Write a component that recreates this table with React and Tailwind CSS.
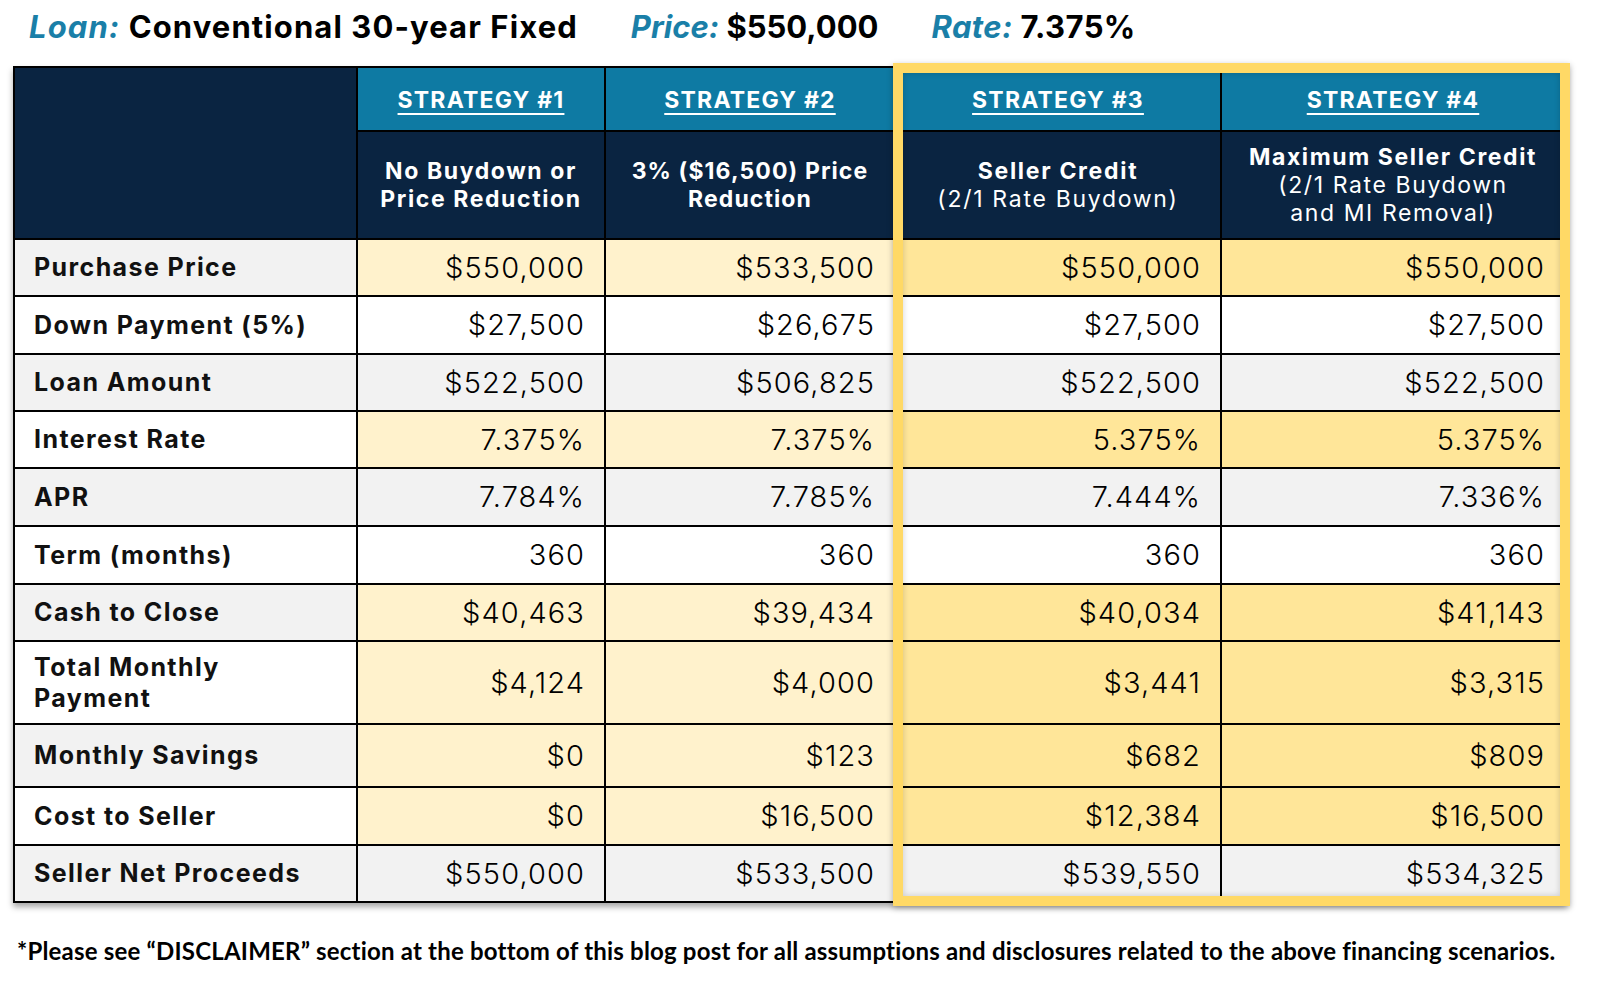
import React from "react";

const rows = [
  { label: "Purchase Price", v: ["$550,000", "$533,500", "$550,000", "$550,000"], hi: true },
  { label: "Down Payment (5%)", v: ["$27,500", "$26,675", "$27,500", "$27,500"] },
  { label: "Loan Amount", v: ["$522,500", "$506,825", "$522,500", "$522,500"] },
  { label: "Interest Rate", v: ["7.375%", "7.375%", "5.375%", "5.375%"], hi: true },
  { label: "APR", v: ["7.784%", "7.785%", "7.444%", "7.336%"] },
  { label: "Term (months)", v: ["360", "360", "360", "360"] },
  { label: "Cash to Close", v: ["$40,463", "$39,434", "$40,034", "$41,143"], hi: true },
  { label: "Total Monthly Payment", v: ["$4,124", "$4,000", "$3,441", "$3,315"], hi: true },
  { label: "Monthly Savings", v: ["$0", "$123", "$682", "$809"], hi: true },
  { label: "Cost to Seller", v: ["$0", "$16,500", "$12,384", "$16,500"], hi: true },
  { label: "Seller Net Proceeds", v: ["$550,000", "$533,500", "$539,550", "$534,325"] },
];

const font = { fontFamily: "Inter, 'Open Sans', sans-serif" };

const App = () => (
  <div className="w-[1600px] h-[982px] bg-white relative overflow-hidden" style={font}>
    {/* title line */}
    <div className="flex gap-[53px] pl-[29px] pt-[4px] h-[66px] text-[31px] font-bold text-black">
      <div className="tracking-[1.1px]">
        <span className="italic text-[#1a7fa8]">Loan:</span> Conventional 30-year Fixed
      </div>
      <div className="tracking-[0px]">
        <span className="italic text-[#1a7fa8]">Price:</span> $550,000
      </div>
      <div className="tracking-[0.4px]">
        <span className="italic text-[#1a7fa8]">Rate:</span> 7.375%
      </div>
    </div>

    {/* table */}
    <div className="relative ml-[13px] w-[1553px]">
      <div className="grid grid-cols-[341px_246px_288px_324px_342px] grid-rows-[62px_106px_55px_56px_55px_55px_56px_56px_55px_81px_61px_56px_55px] gap-[2px] p-[2px] bg-black shadow-[0_4px_6px_rgba(0,0,0,0.35)]">
        <div className="row-span-2 bg-[#0a2441]" />
        {["STRATEGY #1", "STRATEGY #2", "STRATEGY #3", "STRATEGY #4"].map((s) => (
          <div key={s} className="bg-[#0e7aa3] flex items-center justify-center pt-[2px]">
            <span className="text-white font-bold text-[23px] underline underline-offset-[5px] decoration-[2px] tracking-[1.2px]">
              {s}
            </span>
          </div>
        ))}
        <div className="bg-[#0a2441] flex items-center justify-center text-center text-white font-bold text-[23px] leading-[28px] tracking-[1.6px]">
          No Buydown or
          <br />
          Price Reduction
        </div>
        <div className="bg-[#0a2441] flex items-center justify-center text-center text-white font-bold text-[23px] leading-[28px] tracking-[1.1px]">
          3% ($16,500) Price
          <br />
          Reduction
        </div>
        <div className="bg-[#0a2441] flex flex-col items-center justify-center text-center text-white text-[23px] leading-[28px] tracking-[1.7px]">
          <span className="font-bold">Seller Credit</span>
          <span>(2/1 Rate Buydown)</span>
        </div>
        <div className="bg-[#0a2441] flex flex-col items-center justify-center text-center text-white text-[23px] leading-[28px] tracking-[1.6px]">
          <span className="font-bold">Maximum Seller Credit</span>
          <span>(2/1 Rate Buydown</span>
          <span>and MI Removal)</span>
        </div>

        {rows.map((r, i) => {
          const base = i % 2 === 0 ? "bg-[#f2f2f2]" : "bg-white";
          return (
            <React.Fragment key={r.label}>
              <div className={`${base} flex items-center pl-[19px] pr-[40px] text-[25px] leading-[31px] font-bold tracking-[1.4px] text-[#111]`}>
                {r.label}
              </div>
              {r.v.map((val, j) => (
                <div
                  key={j}
                  className={`${r.hi ? (j < 2 ? "bg-[#fff2cc]" : "bg-[#ffe699]") : base} flex items-center justify-end pr-[19px] text-[29px] font-light tracking-[1.1px] text-black`}
                >
                  {val}
                </div>
              ))}
            </React.Fragment>
          );
        })}
      </div>

      {/* highlight frame over strategies 3 and 4 */}
      <div className="absolute left-[880px] top-[-3px] right-[-4px] bottom-[-3px] border-[10px] border-[#ffd966] shadow-[0_2px_6px_rgba(0,0,0,0.3),inset_0_0_6px_rgba(0,0,0,0.18)] pointer-events-none" />
    </div>

    {/* footer */}
    <div
      className="pl-[17px] mt-[30px] text-[24px] font-bold text-black tracking-[0.2px]"
      style={{ fontFamily: "Lato, 'Liberation Sans', sans-serif" }}
    >
      *Please see “DISCLAIMER” section at the bottom of this blog post for all assumptions and disclosures related to the above financing scenarios.
    </div>
  </div>
);

export default App;
